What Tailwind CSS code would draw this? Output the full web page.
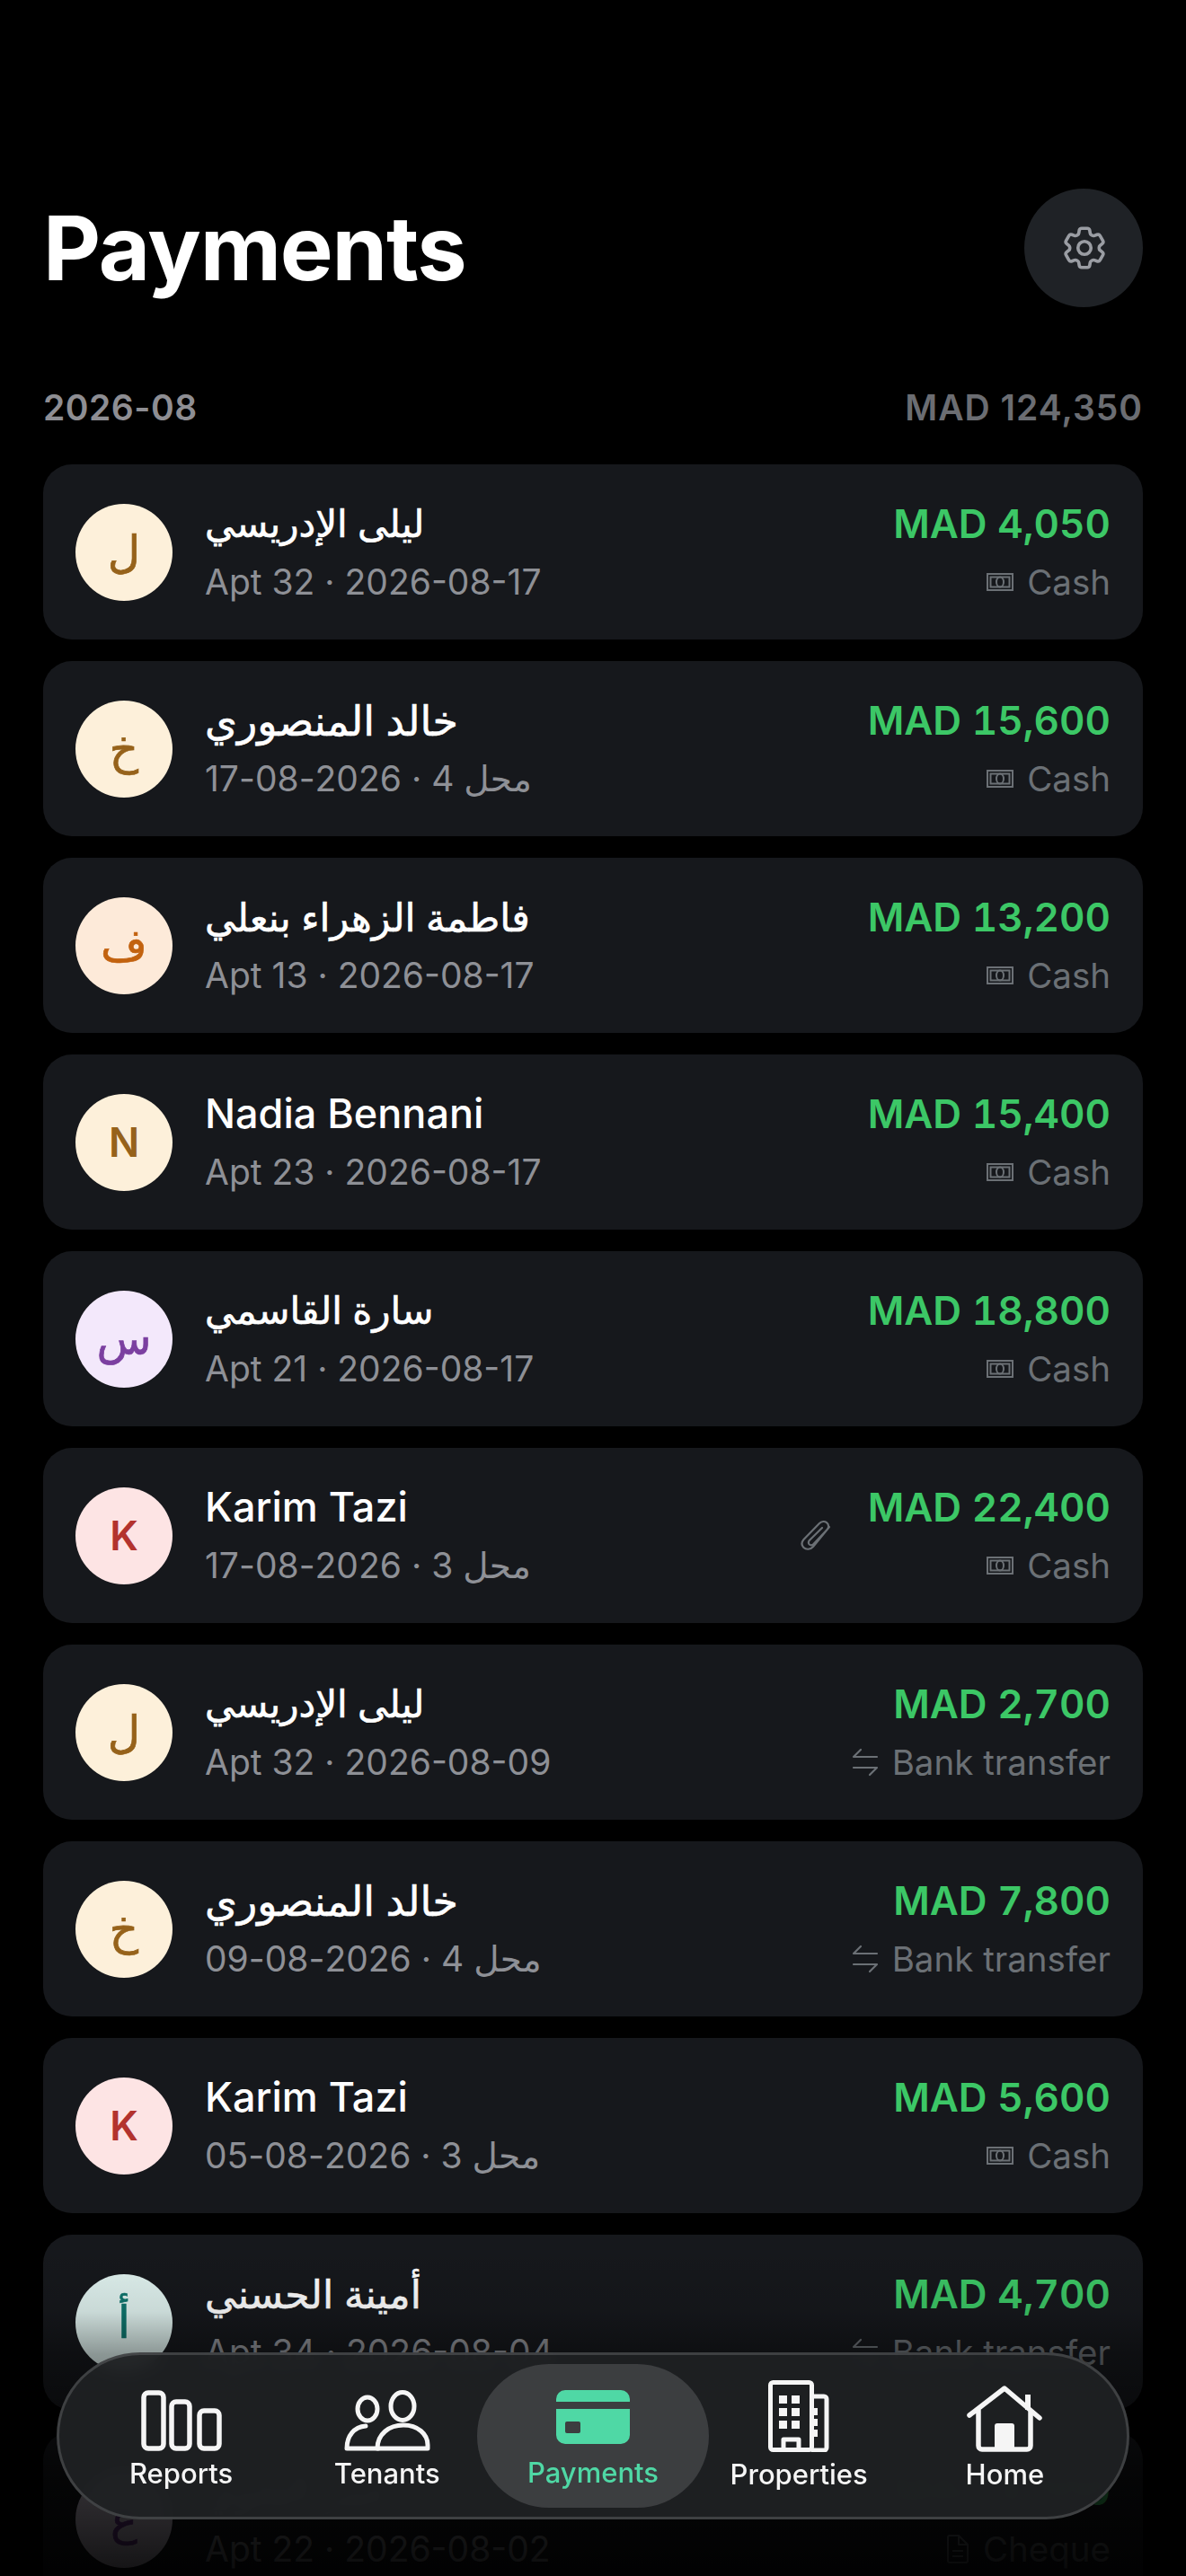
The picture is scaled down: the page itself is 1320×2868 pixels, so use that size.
<!DOCTYPE html>
<html lang="en">
<head>
<meta charset="utf-8">
<script src="https://cdn.jsdelivr.net/npm/@tailwindcss/browser@4"></script>
<title>Payments</title>
</head>
<body class="bg-black">
<div class="relative w-[1320px] h-[2868px] overflow-hidden bg-black font-['Inter','Noto_Sans','DejaVu_Sans',sans-serif]">
  <header class="flex items-center justify-between pt-[210px] px-[48px]">
    <h1 class="text-[99px] leading-[132px] font-bold text-white tracking-[-1.2px]">Payments</h1>
    <button class="w-[132px] h-[132px] rounded-full bg-[#1f2226] flex items-center justify-center">
      <svg class="w-[58px] h-[58px] ml-[2px]" viewBox="0 0 24 24" fill="none" stroke="#9a9da3" stroke-width="1.5" stroke-linecap="round" stroke-linejoin="round"><path d="M9.594 3.94c.09-.542.56-.94 1.11-.94h2.593c.55 0 1.02.398 1.11.94l.213 1.281c.063.374.313.686.645.87.074.04.147.083.22.127.325.196.72.257 1.075.124l1.217-.456a1.125 1.125 0 0 1 1.37.49l1.296 2.247a1.125 1.125 0 0 1-.26 1.431l-1.003.827c-.293.241-.438.613-.43.992a7.723 7.723 0 0 1 0 .255c-.008.378.137.75.43.991l1.004.827c.424.35.534.955.26 1.43l-1.298 2.247a1.125 1.125 0 0 1-1.369.491l-1.217-.456c-.355-.133-.75-.072-1.076.124a6.47 6.47 0 0 1-.22.128c-.331.183-.581.495-.644.869l-.213 1.281c-.09.543-.56.94-1.11.94h-2.594c-.55 0-1.019-.398-1.11-.94l-.213-1.281c-.062-.374-.312-.686-.644-.87a6.52 6.52 0 0 1-.22-.127c-.325-.196-.72-.257-1.076-.124l-1.217.456a1.125 1.125 0 0 1-1.369-.49l-1.297-2.247a1.125 1.125 0 0 1 .26-1.431l1.004-.827c.292-.24.437-.613.43-.991a6.932 6.932 0 0 1 0-.255c.007-.38-.138-.751-.43-.992l-1.004-.827a1.125 1.125 0 0 1-.26-1.43l1.297-2.247a1.125 1.125 0 0 1 1.37-.491l1.216.456c.356.133.751.072 1.076-.124.072-.044.146-.086.22-.128.332-.183.582-.495.644-.869l.214-1.28Z"/><path d="M15 12a3 3 0 1 1-6 0 3 3 0 0 1 6 0Z"/></svg>
    </button>
  </header>

  <div class="flex items-center justify-between px-[48px] mt-[88px] h-[48px] text-[39px] font-semibold">
    <span class="text-[#8e8e93] tracking-[0.5px]">2026-08</span>
    <span class="text-[#6b6d72] tracking-[1px]">MAD 124,350</span>
  </div>

  <main class="flex flex-col gap-[24px] px-[48px] mt-[39px]">
    <!-- 1 -->
    <article class="h-[195px] rounded-[32px] bg-[#16181c] flex items-center gap-[36px] px-[36px]">
      <div class="w-[108px] h-[108px] rounded-full bg-[#fdf0da] text-[#96621a] flex items-center justify-center text-[50px] font-medium [-webkit-text-stroke:0.7px_currentColor] shrink-0">ل</div>
      <div class="flex-1 min-w-0"><div class="text-[42px] leading-[64px] font-medium text-white [-webkit-text-stroke:0.6px_white]">ليلى الإدريسي</div><div class="text-[39px] leading-[64px] text-[#8e9096] translate-y-[1px]">Apt 32 · 2026-08-17</div></div>
      <div class="text-right"><div class="text-[44px] leading-[64px] font-semibold text-[#3cc766] tabular-nums">MAD 4,050</div><div class="flex items-center justify-end gap-[15px] text-[38.5px] leading-[64px] text-[#6b7075] translate-y-[1px]"><svg class="w-[30px] h-[20px]" viewBox="0 0 30 20" fill="none" stroke="currentColor" stroke-width="2"><rect x="1" y="1" width="28" height="18"/><rect x="4.5" y="4.5" width="21" height="11"/><ellipse cx="15" cy="10" rx="4" ry="5.5"/></svg><span>Cash</span></div></div>
    </article>
    <!-- 2 -->
    <article class="h-[195px] rounded-[32px] bg-[#16181c] flex items-center gap-[36px] px-[36px]">
      <div class="w-[108px] h-[108px] rounded-full bg-[#fdf0da] text-[#96621a] flex items-center justify-center text-[50px] font-medium [-webkit-text-stroke:0.7px_currentColor] shrink-0">خ</div>
      <div class="flex-1 min-w-0"><div class="text-[46px] leading-[64px] font-medium text-white [-webkit-text-stroke:0.6px_white]">خالد المنصوري</div><div class="text-[39px] leading-[64px] text-[#8e9096] translate-y-[1px]">محل 4 · 2026-08-17</div></div>
      <div class="text-right"><div class="text-[44px] leading-[64px] font-semibold text-[#3cc766] tabular-nums">MAD 15,600</div><div class="flex items-center justify-end gap-[15px] text-[38.5px] leading-[64px] text-[#6b7075] translate-y-[1px]"><svg class="w-[30px] h-[20px]" viewBox="0 0 30 20" fill="none" stroke="currentColor" stroke-width="2"><rect x="1" y="1" width="28" height="18"/><rect x="4.5" y="4.5" width="21" height="11"/><ellipse cx="15" cy="10" rx="4" ry="5.5"/></svg><span>Cash</span></div></div>
    </article>
    <!-- 3 -->
    <article class="h-[195px] rounded-[32px] bg-[#16181c] flex items-center gap-[36px] px-[36px]">
      <div class="w-[108px] h-[108px] rounded-full bg-[#fdead9] text-[#c2620f] flex items-center justify-center text-[50px] font-medium [-webkit-text-stroke:0.7px_currentColor] shrink-0">ف</div>
      <div class="flex-1 min-w-0"><div class="text-[43px] leading-[64px] font-medium text-white [-webkit-text-stroke:0.6px_white]">فاطمة الزهراء بنعلي</div><div class="text-[39px] leading-[64px] text-[#8e9096] translate-y-[1px]">Apt 13 · 2026-08-17</div></div>
      <div class="text-right"><div class="text-[44px] leading-[64px] font-semibold text-[#3cc766] tabular-nums">MAD 13,200</div><div class="flex items-center justify-end gap-[15px] text-[38.5px] leading-[64px] text-[#6b7075] translate-y-[1px]"><svg class="w-[30px] h-[20px]" viewBox="0 0 30 20" fill="none" stroke="currentColor" stroke-width="2"><rect x="1" y="1" width="28" height="18"/><rect x="4.5" y="4.5" width="21" height="11"/><ellipse cx="15" cy="10" rx="4" ry="5.5"/></svg><span>Cash</span></div></div>
    </article>
    <!-- 4 -->
    <article class="h-[195px] rounded-[32px] bg-[#16181c] flex items-center gap-[36px] px-[36px]">
      <div class="w-[108px] h-[108px] rounded-full bg-[#fdf0da] text-[#96621a] flex items-center justify-center text-[45px] font-semibold shrink-0">N</div>
      <div class="flex-1 min-w-0"><div class="text-[45px] leading-[64px] font-medium text-white">Nadia Bennani</div><div class="text-[39px] leading-[64px] text-[#8e9096] translate-y-[1px]">Apt 23 · 2026-08-17</div></div>
      <div class="text-right"><div class="text-[44px] leading-[64px] font-semibold text-[#3cc766] tabular-nums">MAD 15,400</div><div class="flex items-center justify-end gap-[15px] text-[38.5px] leading-[64px] text-[#6b7075] translate-y-[1px]"><svg class="w-[30px] h-[20px]" viewBox="0 0 30 20" fill="none" stroke="currentColor" stroke-width="2"><rect x="1" y="1" width="28" height="18"/><rect x="4.5" y="4.5" width="21" height="11"/><ellipse cx="15" cy="10" rx="4" ry="5.5"/></svg><span>Cash</span></div></div>
    </article>
    <!-- 5 -->
    <article class="h-[195px] rounded-[32px] bg-[#16181c] flex items-center gap-[36px] px-[36px]">
      <div class="w-[108px] h-[108px] rounded-full bg-[#f3e8fb] text-[#7b3fa0] flex items-center justify-center text-[50px] font-medium [-webkit-text-stroke:0.7px_currentColor] shrink-0">س</div>
      <div class="flex-1 min-w-0"><div class="text-[42px] leading-[64px] font-medium text-white [-webkit-text-stroke:0.6px_white]">سارة القاسمي</div><div class="text-[39px] leading-[64px] text-[#8e9096] translate-y-[1px]">Apt 21 · 2026-08-17</div></div>
      <div class="text-right"><div class="text-[44px] leading-[64px] font-semibold text-[#3cc766] tabular-nums">MAD 18,800</div><div class="flex items-center justify-end gap-[15px] text-[38.5px] leading-[64px] text-[#6b7075] translate-y-[1px]"><svg class="w-[30px] h-[20px]" viewBox="0 0 30 20" fill="none" stroke="currentColor" stroke-width="2"><rect x="1" y="1" width="28" height="18"/><rect x="4.5" y="4.5" width="21" height="11"/><ellipse cx="15" cy="10" rx="4" ry="5.5"/></svg><span>Cash</span></div></div>
    </article>
    <!-- 6 -->
    <article class="h-[195px] rounded-[32px] bg-[#16181c] flex items-center gap-[36px] px-[36px]">
      <div class="w-[108px] h-[108px] rounded-full bg-[#fde4e4] text-[#b3332e] flex items-center justify-center text-[45px] font-semibold shrink-0">K</div>
      <div class="flex-1 min-w-0"><div class="text-[45px] leading-[64px] font-medium text-white">Karim Tazi</div><div class="text-[39px] leading-[64px] text-[#8e9096] translate-y-[1px]">محل 3 · 2026-08-17</div></div>
      <svg class="w-[36px] h-[36px] shrink-0 mr-[3px]" viewBox="0 0 36 36" fill="none" stroke="#6b7075" stroke-width="2.2" stroke-linecap="round" stroke-linejoin="round"><path d="M32 8 14 30c-3 3.5-8 3.5-10.500 1-2.500-2.500-2.500-6 0-9L21 4c2.500-2.500 6-2.500 8-.8 2.500 2 2.800 5 .8 7.500L14.500 27c-1.500 1.500-3.500 1.500-4.700.5-1.200-1-1.300-3 0-4.500L24 9"/></svg>
      <div class="text-right"><div class="text-[44px] leading-[64px] font-semibold text-[#3cc766] tabular-nums">MAD 22,400</div><div class="flex items-center justify-end gap-[15px] text-[38.5px] leading-[64px] text-[#6b7075] translate-y-[1px]"><svg class="w-[30px] h-[20px]" viewBox="0 0 30 20" fill="none" stroke="currentColor" stroke-width="2"><rect x="1" y="1" width="28" height="18"/><rect x="4.5" y="4.5" width="21" height="11"/><ellipse cx="15" cy="10" rx="4" ry="5.5"/></svg><span>Cash</span></div></div>
    </article>
    <!-- 7 -->
    <article class="h-[195px] rounded-[32px] bg-[#16181c] flex items-center gap-[36px] px-[36px]">
      <div class="w-[108px] h-[108px] rounded-full bg-[#fdf0da] text-[#96621a] flex items-center justify-center text-[50px] font-medium [-webkit-text-stroke:0.7px_currentColor] shrink-0">ل</div>
      <div class="flex-1 min-w-0"><div class="text-[42px] leading-[64px] font-medium text-white [-webkit-text-stroke:0.6px_white]">ليلى الإدريسي</div><div class="text-[39px] leading-[64px] text-[#8e9096] translate-y-[1px]">Apt 32 · 2026-08-09</div></div>
      <div class="text-right"><div class="text-[44px] leading-[64px] font-semibold text-[#3cc766] tabular-nums">MAD 2,700</div><div class="flex items-center justify-end gap-[15px] text-[38.5px] leading-[64px] text-[#6b7075] translate-y-[1px]"><svg class="w-[30px] h-[32px]" viewBox="0 0 30 32" fill="none" stroke="currentColor" stroke-width="2.2" stroke-linecap="round" stroke-linejoin="round"><path d="M28 10H2l8-8M2 22h26l-8 8"/></svg><span>Bank transfer</span></div></div>
    </article>
    <!-- 8 -->
    <article class="h-[195px] rounded-[32px] bg-[#16181c] flex items-center gap-[36px] px-[36px]">
      <div class="w-[108px] h-[108px] rounded-full bg-[#fdf0da] text-[#96621a] flex items-center justify-center text-[50px] font-medium [-webkit-text-stroke:0.7px_currentColor] shrink-0">خ</div>
      <div class="flex-1 min-w-0"><div class="text-[46px] leading-[64px] font-medium text-white [-webkit-text-stroke:0.6px_white]">خالد المنصوري</div><div class="text-[39px] leading-[64px] text-[#8e9096] translate-y-[1px]">محل 4 · 2026-08-09</div></div>
      <div class="text-right"><div class="text-[44px] leading-[64px] font-semibold text-[#3cc766] tabular-nums">MAD 7,800</div><div class="flex items-center justify-end gap-[15px] text-[38.5px] leading-[64px] text-[#6b7075] translate-y-[1px]"><svg class="w-[30px] h-[32px]" viewBox="0 0 30 32" fill="none" stroke="currentColor" stroke-width="2.2" stroke-linecap="round" stroke-linejoin="round"><path d="M28 10H2l8-8M2 22h26l-8 8"/></svg><span>Bank transfer</span></div></div>
    </article>
    <!-- 9 -->
    <article class="h-[195px] rounded-[32px] bg-[#16181c] flex items-center gap-[36px] px-[36px]">
      <div class="w-[108px] h-[108px] rounded-full bg-[#fde4e4] text-[#b3332e] flex items-center justify-center text-[45px] font-semibold shrink-0">K</div>
      <div class="flex-1 min-w-0"><div class="text-[45px] leading-[64px] font-medium text-white">Karim Tazi</div><div class="text-[39px] leading-[64px] text-[#8e9096] translate-y-[1px]">محل 3 · 2026-08-05</div></div>
      <div class="text-right"><div class="text-[44px] leading-[64px] font-semibold text-[#3cc766] tabular-nums">MAD 5,600</div><div class="flex items-center justify-end gap-[15px] text-[38.5px] leading-[64px] text-[#6b7075] translate-y-[1px]"><svg class="w-[30px] h-[20px]" viewBox="0 0 30 20" fill="none" stroke="currentColor" stroke-width="2"><rect x="1" y="1" width="28" height="18"/><rect x="4.5" y="4.5" width="21" height="11"/><ellipse cx="15" cy="10" rx="4" ry="5.5"/></svg><span>Cash</span></div></div>
    </article>
    <!-- 10 -->
    <article class="h-[195px] rounded-[32px] bg-[#16181c] flex items-center gap-[36px] px-[36px]">
      <div class="w-[108px] h-[108px] rounded-full bg-[#e0f2ef] text-[#0f766e] flex items-center justify-center text-[50px] font-medium [-webkit-text-stroke:0.7px_currentColor] shrink-0">أ</div>
      <div class="flex-1 min-w-0"><div class="text-[44px] leading-[64px] font-medium text-white [-webkit-text-stroke:0.6px_white]">أمينة الحسني</div><div class="text-[39px] leading-[64px] text-[#8e9096] translate-y-[1px]">Apt 34 · 2026-08-04</div></div>
      <div class="text-right"><div class="text-[44px] leading-[64px] font-semibold text-[#3cc766] tabular-nums">MAD 4,700</div><div class="flex items-center justify-end gap-[15px] text-[38.5px] leading-[64px] text-[#6b7075] translate-y-[1px]"><svg class="w-[30px] h-[32px]" viewBox="0 0 30 32" fill="none" stroke="currentColor" stroke-width="2.2" stroke-linecap="round" stroke-linejoin="round"><path d="M28 10H2l8-8M2 22h26l-8 8"/></svg><span>Bank transfer</span></div></div>
    </article>
    <!-- 11 -->
    <article class="h-[195px] rounded-[32px] bg-[#16181c] flex items-center gap-[36px] px-[36px]">
      <div class="w-[108px] h-[108px] rounded-full bg-[#f3e8fb] text-[#7b3fa0] flex items-center justify-center text-[50px] font-medium [-webkit-text-stroke:0.7px_currentColor] shrink-0">ع</div>
      <div class="flex-1 min-w-0"><div class="text-[44px] leading-[64px] font-medium text-white [-webkit-text-stroke:0.6px_white]">عمر العلوي</div><div class="text-[39px] leading-[64px] text-[#8e9096] translate-y-[1px]">Apt 22 · 2026-08-02</div></div>
      <div class="text-right"><div class="text-[44px] leading-[64px] font-semibold text-[#3cc766] tabular-nums">MAD 9,000</div><div class="flex items-center justify-end gap-[15px] text-[38.5px] leading-[64px] text-[#6b7075] translate-y-[1px]"><svg class="w-[26px] h-[32px]" viewBox="0 0 26 32" fill="none" stroke="currentColor" stroke-width="2" stroke-linejoin="round"><path d="M2 3a2 2 0 0 1 2-2h10l10 10v18a2 2 0 0 1-2 2H4a2 2 0 0 1-2-2ZM14 1v10h10M7 18h12M7 24h12"/></svg><span>Cheque</span></div></div>
    </article>
  </main>

  <!-- bottom fade -->
  <div class="absolute left-0 right-0 top-[2500px] h-[368px] z-10 pointer-events-none bg-[linear-gradient(to_bottom,rgba(0,0,0,0)_0%,rgba(0,0,0,0.1)_20%,rgba(0,0,0,0.38)_33%,rgba(0,0,0,0.8)_73%,rgba(0,0,0,0.92)_100%)]"></div>

  <!-- nav -->
  <nav class="absolute z-20 left-[63px] top-[2619px] w-[1194px] h-[186px] rounded-[93px] border-[3px] border-white/15 bg-[#1f2123]/95 backdrop-blur-[8px] grid grid-cols-5 px-[21px] items-center">
    <a class="flex flex-col items-center justify-center h-[160px]">
      <svg class="w-[90px] h-[68px] mt-[10px]" viewBox="0 0 90 68" fill="none" stroke="#f5f5f5" stroke-width="5.500" stroke-linejoin="round"><rect x="3" y="3" width="22" height="62" rx="5"/><rect x="34" y="13" width="20" height="52" rx="5"/><rect x="65" y="23" width="22" height="42" rx="5"/></svg>
      <span class="mt-[5px] text-[31px] leading-[40px] font-medium text-[#f5f5f5]">Reports</span>
    </a>
    <a class="flex flex-col items-center justify-center h-[160px]">
      <svg class="w-[96px] h-[68px] mt-[10px]" viewBox="0 0 96 68" fill="none" stroke="#f5f5f5" stroke-width="5" stroke-linecap="round" stroke-linejoin="round"><ellipse cx="26" cy="21" rx="11" ry="13"/><ellipse cx="65" cy="18" rx="13" ry="15.500"/><path d="M38 65H3c0-14 8-24 21-25"/><path d="M37 65c0-16 13-26 29-26s27 10 27 22v4Z"/></svg>
      <span class="mt-[5px] text-[31px] leading-[40px] font-medium text-[#f5f5f5]">Tenants</span>
    </a>
    <a class="flex flex-col items-center justify-center h-[160px] -mx-[14px] rounded-[80px] bg-[#3c3e40]">
      <svg class="w-[82px] h-[60px] mt-[10px]" viewBox="0 0 82 60"><path fill="#4fd8a5" d="M10 0h62a10 10 0 0 1 10 10v3H0v-3A10 10 0 0 1 10 0ZM0 21h82v29a10 10 0 0 1-10 10H10A10 10 0 0 1 0 50Z"/><rect x="10" y="35" width="17" height="13" rx="2" fill="#3c3e40"/></svg>
      <span class="mt-[12px] text-[31px] leading-[40px] font-medium text-[#4fd8a5]">Payments</span>
    </a>
    <a class="flex flex-col items-center justify-center h-[160px]">
      <svg class="w-[68px] h-[80px]" viewBox="0 0 68 80" fill="none"><g stroke="#f5f5f5" stroke-width="5" stroke-linejoin="round"><rect x="2.500" y="2.500" width="46" height="75" rx="3"/><path d="M48 18h14a3 3 0 0 1 3 3v54a3 3 0 0 1-3 3H48"/><path d="M17 77V66h17v11"/></g><g fill="#f5f5f5"><rect x="12" y="17" width="9" height="9"/><rect x="26" y="17" width="9" height="9"/><rect x="12" y="31" width="9" height="9"/><rect x="26" y="31" width="9" height="9"/><rect x="12" y="45" width="9" height="9"/><rect x="26" y="45" width="9" height="9"/><rect x="49" y="31" width="6" height="8"/><rect x="49" y="43" width="6" height="8"/><rect x="49" y="55" width="6" height="8"/></g></svg>
      <span class="mt-[5px] text-[31px] leading-[40px] font-medium text-[#f5f5f5]">Properties</span>
    </a>
    <a class="flex flex-col items-center justify-center h-[160px]">
      <svg class="w-[84px] h-[74px] mt-[6px]" viewBox="0 0 84 74" fill="none"><path stroke="#f5f5f5" stroke-width="5.500" stroke-linecap="round" stroke-linejoin="round" d="M3 33 42 3l39 33M13 27v40a4 4 0 0 0 4 4h50a4 4 0 0 0 4-4V29"/><path stroke="#f5f5f5" stroke-width="6" d="M68 27V10"/><path fill="#f5f5f5" d="M31 45a3 3 0 0 1 3-3h16a3 3 0 0 1 3 3v26H31Z"/></svg>
      <span class="mt-[5px] text-[31px] leading-[40px] font-medium text-[#f5f5f5]">Home</span>
    </a>
  </nav>
</div>
</body>
</html>
